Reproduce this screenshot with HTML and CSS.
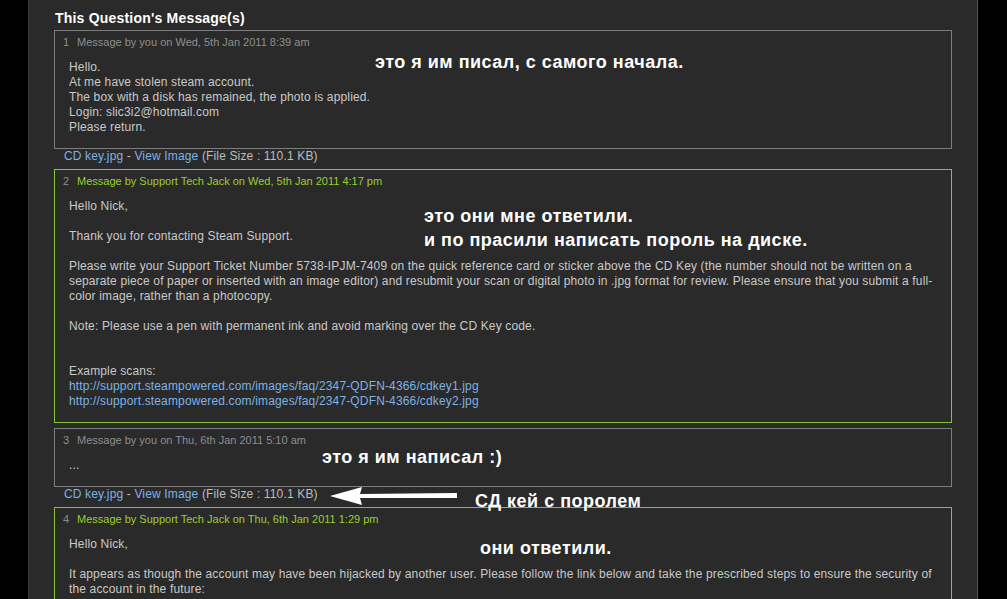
FILE: index.html
```html
<!doctype html>
<html>
<head>
<meta charset="utf-8">
<title>This Question's Message(s)</title>
<link rel="stylesheet" href="styles.css">
</head>

<body>
<div class="page">
	<div class="panel">
		<h2 class="title">This Question's Message(s)</h2>

		<div class="msg">
			<div class="msg_head"><span class="num">1</span>Message by you on Wed, 5th Jan 2011 8:39 am</div>
			<div class="msg_body">
				Hello.<br>
				At me have stolen steam account.<br>
				The box with a disk has remained, the photo is applied.<br>
				Login: slic3i2@hotmail.com<br>
				Please return.
			</div>
		</div>
		<div class="attach"><a href="javascript:;">CD key.jpg</a> - <a href="javascript:;">View Image</a> (File Size : 110.1 KB)</div>

		<div class="msg support">
			<div class="msg_head"><span class="num">2</span>Message by Support Tech Jack on Wed, 5th Jan 2011 4:17 pm</div>
			<div class="msg_body">
				Hello Nick,<br>
				<br>
				Thank you for contacting Steam Support.<br>
				<br>
				Please write your Support Ticket Number 5738-IPJM-7409 on the quick reference card or sticker above the CD Key (the number should not be written on a separate piece of paper or inserted with an image editor) and resubmit your scan or digital photo in .jpg format for review. Please ensure that you submit a full-color image, rather than a photocopy.<br>
				<br>
				Note: Please use a pen with permanent ink and avoid marking over the CD Key code.<br>
				<br>
				<br>
				Example scans:<br>
				<a href="javascript:;">http://support.steampowered.com/images/faq/2347-QDFN-4366/cdkey1.jpg</a><br>
				<a href="javascript:;">http://support.steampowered.com/images/faq/2347-QDFN-4366/cdkey2.jpg</a>
			</div>
		</div>

		<div class="msg">
			<div class="msg_head"><span class="num">3</span>Message by you on Thu, 6th Jan 2011 5:10 am</div>
			<div class="msg_body">...</div>
		</div>
		<div class="attach"><a href="javascript:;">CD key.jpg</a> - <a href="javascript:;">View Image</a> (File Size : 110.1 KB)</div>

		<div class="msg support">
			<div class="msg_head"><span class="num">4</span>Message by Support Tech Jack on Thu, 6th Jan 2011 1:29 pm</div>
			<div class="msg_body">
				Hello Nick,<br>
				<br>
				It appears as though the account may have been hijacked by another user. Please follow the link below and take the prescribed steps to ensure the security of the account in the future:<br>
				<br>
				<a href="javascript:;">https://support.steampowered.com/kb_article.php?ref=5648-QGRH-4858</a>
			</div>
		</div>
	</div>

	<!-- пометки поверх скриншота -->
	<div class="note n1">это я им писал, с самого начала.</div>
	<div class="note n2">это они мне ответили.<br>и по прасили написать пороль на диске.</div>
	<div class="note n3">это я им написал :)</div>
	<div class="note n4">СД кей с поролем</div>
	<div class="note n5">они ответили.</div>
	<svg class="arrow" width="134" height="22" viewBox="0 0 134 22">
		<path d="M1 10 L33 1 L31 8 L128 7 L128 12 L31 12 L33 19 Z" fill="#fff"/>
	</svg>
</div>
</body>
</html>
```

FILE: styles.css
```css
*{ margin:0; padding:0;}
body{ background:#000; font-family:"Liberation Sans", Arial, sans-serif; overflow:hidden;}
a{ color:#7cb2e4; text-decoration:none;}

.page{ position:relative; height:599px; overflow:hidden;}
.panel{ width:950px; min-height:599px; margin-left:28px; box-sizing:border-box; padding:10px 25px 0 25px; background:#2a2a2a; border-left:1px solid #3b3b3b; border-right:1px solid #575757;}

.title{ font-size:14px; line-height:17px; color:#fff; font-weight:bold; margin:0 0 3px 1px; letter-spacing:0.2px;}

.msg{ border:1px solid #7d7d7d; margin-bottom:5px;}
.msg.support{ border-color:#86c232;}
.msg_head{ padding:4px 8px 0; font-size:11px; line-height:14px; color:#8e8e8e;}
.msg_head .num{ display:inline-block; width:14px;}
.support .msg_head{ color:#9acd32;}
.support .msg_head .num{ color:#8e8e8e;}
.msg_body{ padding:11px 15px 13px 14px; font-size:12px; line-height:15px; color:#c9c9c9; letter-spacing:0.15px;}

.attach{ margin:-5px 0 5px 10px; font-size:12px; line-height:15px; color:#bdbdbd; letter-spacing:0.15px;}

.note{ position:absolute; color:#fff; font-size:18px; line-height:24px; font-weight:bold; white-space:nowrap; letter-spacing:0.5px;}
.n1{ left:375px; top:50px;}
.n2{ left:424px; top:204px;}
.n3{ left:322px; top:445px;}
.n4{ left:475px; top:489px;}
.n5{ left:480px; top:536px;}
.arrow{ position:absolute; left:329px; top:486px;}
```
